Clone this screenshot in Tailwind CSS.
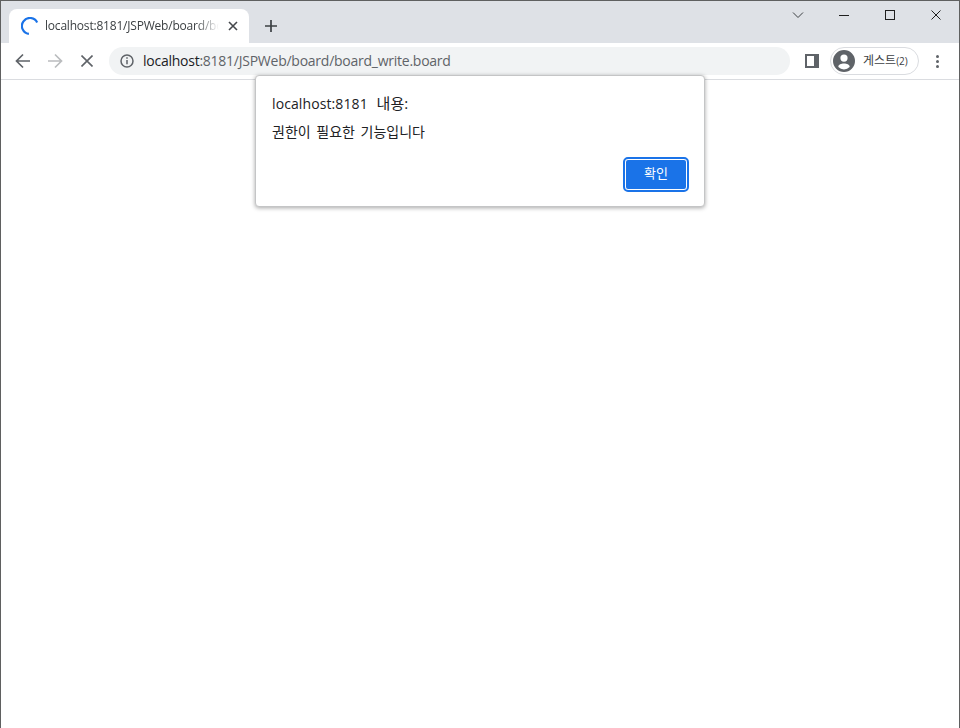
<!DOCTYPE html>
<html>
<head>
    <title>localhost:8181/JSPWeb/board/board_write.board</title>
    <script src="https://cdn.jsdelivr.net/npm/@tailwindcss/browser@4"></script>
</head>
<body class="bg-white">
    <div class="relative w-[960px] h-[728px] overflow-hidden border-l border-t border-r border-[#5f6060] bg-white font-['Open_Sans','Noto_Sans_CJK_KR',sans-serif]">
        <!-- tab strip -->
        <div class="flex h-[42px] bg-[#dee1e6]">
            <div class="relative mt-2 ml-2 flex h-[34px] w-[240px] items-center rounded-t-lg bg-white">
                <svg class="ml-[12px] h-[18px] w-[18px]" viewBox="0 0 18 18" fill="none">
                    <path d="M15.6 4.6A8 8 0 1 0 9 17" transform="rotate(8 9 9)" stroke="#1a73e8" stroke-width="2.2"/>
                </svg>
                <span class="ml-[6px] w-[174px] overflow-hidden text-[12px] leading-[16px] tracking-[-0.2px] whitespace-nowrap text-[#3c4043] [mask-image:linear-gradient(to_right,black_150px,transparent_174px)]">localhost:8181/JSPWeb/board/board_write.board</span>
                <svg class="ml-[9px] h-[10px] w-[10px]" viewBox="0 0 10 10" fill="none"><path d="M1 1l8 8M9 1l-8 8" stroke="#45484c" stroke-width="1.6"/></svg>
            </div>
            <svg class="mt-[19px] ml-[16px] h-3 w-3" viewBox="0 0 12 12" fill="none"><path d="M6 0v12M0 6h12" stroke="#3c4043" stroke-width="1.7"/></svg>
            <div class="ml-auto flex items-start">
                <svg class="mt-[10px] mr-[35px] h-[8px] w-[12px]" viewBox="0 0 12 8" fill="none"><path d="M1 1.5l5 5 5-5" stroke="#3c4043"/></svg>
                <svg class="mt-[14px] mr-[36px] h-[1px] w-[10px]" viewBox="0 0 10 1"><path d="M0 .5h10" stroke="#1f1f1f"/></svg>
                <svg class="mt-[9px] mr-[36px] h-[10px] w-[10px]" viewBox="0 0 10 10" fill="none"><rect x=".5" y=".5" width="9" height="9" stroke="#1f1f1f"/></svg>
                <svg class="mt-[9px] mr-[18px] h-[10px] w-[10px]" viewBox="0 0 10 10" fill="none"><path d="M.5.5l9 9M9.5.5l-9 9" stroke="#1f1f1f"/></svg>
            </div>
        </div>
        <!-- toolbar -->
        <div class="flex h-[37px] items-center border-b border-[#dadce0] bg-white">
            <svg class="ml-[14px] h-[16px] w-[16px]" viewBox="0 0 16 16" fill="none"><path d="M15 8H2M8 1.5L1.5 8 8 14.5" stroke="#5f6368" stroke-width="1.7"/></svg>
            <svg class="ml-[16px] h-[16px] w-[16px]" viewBox="0 0 16 16" fill="none"><path d="M1 8h13M8 1.5L14.5 8 8 14.5" stroke="#babcbe" stroke-width="1.7"/></svg>
            <svg class="ml-[18px] h-[12px] w-[12px]" viewBox="0 0 12 12" fill="none"><path d="M.5.5l11 11M11.5.5l-11 11" stroke="#5f6368" stroke-width="1.6"/></svg>
            <div class="ml-[16px] flex h-[28px] w-[681px] items-center rounded-full bg-[#f1f3f4]">
                <svg class="ml-[11px] h-[14px] w-[14px]" viewBox="0 0 14 14" fill="none">
                    <circle cx="7" cy="7" r="6" stroke="#5f6368" stroke-width="1.5"/>
                    <path d="M7 6v4.2M7 3.2v1.6" stroke="#5f6368" stroke-width="1.5"/>
                </svg>
                <span class="ml-[9px] text-[14px] leading-[20px] tracking-[-0.25px] whitespace-nowrap text-[#5f6368]"><span class="text-[#202124]">localhost</span>:8181/JSPWeb/board/board_write.board</span>
            </div>
            <svg class="ml-[15px] h-[14px] w-[14px]" viewBox="0 0 14 14"><path fill-rule="evenodd" d="M0 0h14v14H0zM2 2v10h7V2z" fill="#5f6368"/></svg>
            <div class="ml-[11px] flex h-[28px] w-[89px] items-center rounded-full border border-[#dadce0]">
                <svg class="ml-[2px] h-[22px] w-[22px]" viewBox="0 0 22 22">
                    <path fill-rule="evenodd" d="M11 0a11 11 0 1 1 0 22a11 11 0 1 1 0-22zM11 4.5a3.6 3.6 0 1 0 0 7.2a3.6 3.6 0 1 0 0-7.2zM11 13.5c-2.8 0-5.6 1.2-5.6 2.8v.8a7.6 7.6 0 0 0 11.2 0v-.8c0-1.6-2.8-2.8-5.6-2.8z" fill="#5f6368"/>
                </svg>
                <span class="ml-[8px] text-[12px] leading-[14px] whitespace-nowrap text-[#3c4043]">게스트<span class="text-[10px]">(2)</span></span>
            </div>
            <div class="ml-[17px] flex flex-col gap-[2px]">
                <span class="h-[3px] w-[3px] rounded-full bg-[#5f6368]"></span>
                <span class="h-[3px] w-[3px] rounded-full bg-[#5f6368]"></span>
                <span class="h-[3px] w-[3px] rounded-full bg-[#5f6368]"></span>
            </div>
        </div>
        <!-- alert dialog -->
        <div class="absolute top-[74px] left-[254px] flex h-[132px] w-[450px] flex-col rounded-[4px] border border-[#c4c5c6] bg-white px-4 pt-[17px] shadow-[0_1px_4px_rgba(0,0,0,0.35)]">
            <div class="text-[14px] leading-[20px] tracking-[0.1px] text-[#202124] [word-spacing:5px]">localhost:8181 <span class="text-[15px]">내용:</span></div>
            <div class="mt-[9px] text-[14px] leading-[17px] text-[#202124] [word-spacing:2px]">권한이 필요한 기능입니다</div>
            <div class="mt-[19px] flex justify-end pr-[1px]">
                <button class="flex h-[31px] w-[62px] items-center justify-center rounded-[3px] border border-white bg-[#1a73e8] pb-[1px] text-[13px] text-white outline-2 outline-offset-0 outline-[#1a73e8]">확인</button>
            </div>
        </div>
    </div>
</body>
</html>
